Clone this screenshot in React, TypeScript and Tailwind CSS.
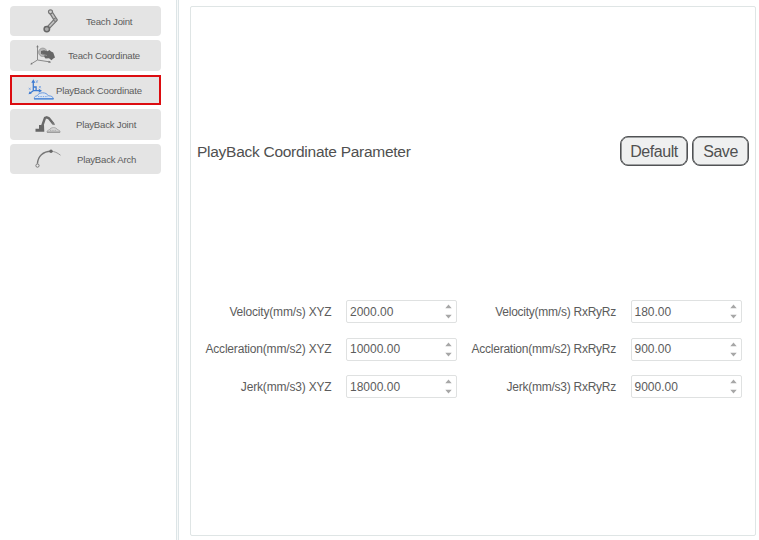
import type { ReactNode } from "react";

const TeachJointIcon = () => (
  <svg width="16" height="24" viewBox="0 0 16 24" fill="none" className="shrink-0">
    <path d="M7.5 2.8 12.6 10.8 4 20" stroke="#747474" strokeWidth="4" strokeLinejoin="round" />
    <path d="M7.5 2.8 12.6 10.8 4 20" stroke="#c2c2c2" strokeWidth="1.7" />
    <circle cx="7.5" cy="2.8" r="2" fill="#cfcfcf" stroke="#747474" strokeWidth="1.2" />
    <circle cx="12.4" cy="10.8" r="1.7" fill="#aaa" stroke="#747474" />
    <circle cx="3.8" cy="20.1" r="2.7" fill="#aaa" stroke="#666" strokeWidth="1.5" />
  </svg>
);

const TeachCoordinateIcon = () => (
  <svg width="26" height="22" viewBox="0 0 26 22" fill="none" className="shrink-0">
    <path d="M7.5 2v14M7.5 16l13 2M7.5 16 1 20" stroke="#8a8a8a" strokeWidth="1" />
    <path d="M7.5 1 6.3 3.3h2.4ZM21 18.2l-2.3-1.4-.3 2.2ZM.3 20.6l1-2.2 1.3 1.8Z" fill="#777" />
    <circle cx="12.8" cy="8.3" r="4.2" fill="#b8b8b8" stroke="#a0a0a0" />
    <path d="m11 7 3-.7 3.5 1 2-1.3 1.5 1.5 2.2 1 1.8 5-2 1.3-1.5 1.5-2.5-2-3.5.2-1.5-2 1-.7-4-2Z" fill="#666" />
    <path d="m12 10 5 1.5" stroke="#999" strokeWidth=".8" />
  </svg>
);

const PlaybackCoordinateIcon = () => (
  <svg width="26" height="21" viewBox="0 0 26 21" fill="none" className="shrink-0">
    <path d="M5.3 2.5v9.2h7.2M5.3 11.7l-3.5 2.5M5.3 8h2.8v3.7" stroke="#3c7bd2" strokeWidth="1.3" />
    <path d="M5.3.3 3.3 3.7h4ZM14 11.7l-3.2-2v4ZM.5 15.3l1.2-3 2 2.3Z" fill="#3c7bd2" />
    <path d="m8 1.5 1.6 2M9.8 1.2 8 4M11 7l1.8 2.3M12.8 7 11 9.3M.8 8.8l1.8 2M2.5 8.7l-1.4 2" stroke="#78a3e2" strokeWidth=".8" />
    <path d="M6.3 19.8c0-2 .8-2.8 2.6-2.8 1-2 3.3-3.2 5.8-3.2 2.7 0 4.6 1.1 5.6 3 3.1 0 4.7 1 5.2 3Z" fill="#dce6f3" stroke="#5b90dc" strokeWidth=".9" />
    <path d="M6 19.9h19.5" stroke="#3c7bd2" strokeWidth="1.1" />
    <path d="M10 17.6h10" stroke="#6b9be0" strokeWidth=".9" strokeDasharray="1.4 1" />
  </svg>
);

const PlaybackJointIcon = () => (
  <svg width="26" height="18" viewBox="0 0 26 18" fill="none" className="shrink-0">
    <path d="M.5 16.7v-3H4V10h5l.3 6.7Z" fill="#666" />
    <path d="m7 11.5 3-8.7 1.7-.5 2 .8 4.8 6" stroke="#696969" strokeWidth="2.4" strokeLinejoin="round" />
    <path d="m17 7.2 2.5 2.6" stroke="#777" strokeWidth="1.5" />
    <path d="M12 17.2c0-1.5 1-2.2 2.3-2.2.8-1.6 2.2-2.4 4.2-2.4s3.4.8 4.2 2.4c1.6 0 2.4.7 2.4 2.2Z" fill="#d6d6d6" stroke="#a0a0a0" strokeWidth=".8" />
    <path d="M12 17.2h13" stroke="#929292" />
    <path d="M15 15.4h7" stroke="#999" strokeWidth=".7" strokeDasharray="1.3 1" />
  </svg>
);

const PlaybackArchIcon = () => (
  <svg width="26" height="19" viewBox="0 0 26 19" fill="none" className="shrink-0">
    <path d="M2.4 14.8C2.8 7.5 8 2.2 16 2.2" stroke="#777" strokeWidth="1.4" />
    <path d="M16 2.2c3.5.2 6.3 1.5 9.5 4" stroke="#999" />
    <circle cx="16" cy="2.3" r="1.7" fill="#666" />
    <circle cx="2.5" cy="16.6" r="1.6" fill="#eee" stroke="#777" />
  </svg>
);

type NavItem = { label: string; icon: ReactNode; inset: string; gap: string; active?: boolean };

const navItems: NavItem[] = [
  { label: "Teach Joint", icon: <TeachJointIcon />, inset: "pl-[33px]", gap: "gap-[27px]" },
  { label: "Teach Coordinate", icon: <TeachCoordinateIcon />, inset: "pl-[20px]", gap: "gap-[12px]" },
  { label: "PlayBack Coordinate", icon: <PlaybackCoordinateIcon />, inset: "pl-[18px]", gap: "gap-[2px]", active: true },
  { label: "PlayBack Joint", icon: <PlaybackJointIcon />, inset: "pl-[25px]", gap: "gap-[15px]" },
  { label: "PlayBack Arch", icon: <PlaybackArchIcon />, inset: "pl-[25px]", gap: "gap-[16px]" },
];

function NavButton({ label, icon, inset, gap, active }: NavItem) {
  return (
    <button
      className={`flex h-[30.5px] w-[151px] items-center whitespace-nowrap text-[9.6px] tracking-[-0.2px] text-[#5c5c5c] ${inset} ${gap} ${
        active ? "bg-[#e4e4e4] outline-2 -outline-offset-2 outline-[#dc0c10]" : "rounded-[4px] bg-[#e4e4e4]"
      }`}
    >
      {icon}
      <span className="pt-[2px]">{label}</span>
    </button>
  );
}

function SpinField({ label, value, tracking }: { label: string; value: string; tracking: string }) {
  return (
    <div className="flex h-[23px] items-center justify-end">
      <span className={`whitespace-nowrap text-[12px] text-[#5c5c5c] ${tracking}`}>{label}</span>
      <div className="ml-[14.5px] flex h-[23px] w-[111px] shrink-0 items-center justify-between rounded-[2px] border border-[#dfe1e1] bg-white pr-[4px] pl-[3px]">
        <span className="text-[12px] text-[#5c5c5c]">{value}</span>
        <svg width="7" height="15" viewBox="0 0 7 15" fill="#a7a7a7">
          <path d="M.3 4.2 3.5.6l3.2 3.6ZM.3 10.8h6.4l-3.2 3.6Z" />
        </svg>
      </div>
    </div>
  );
}

const linear = "tracking-[-0.18px]";
const angular = "tracking-[-0.25px]";

const actionClass =
  "h-[30px] rounded-[8px] border border-[#505254] bg-[#eff0f0] pt-px text-[16px] tracking-[-0.45px] text-[#505050] shadow-[inset_0_0_0_0.6px_#505254]";

export default function App() {
  return (
    <div className="flex h-[540px] w-[759px] overflow-hidden bg-white font-['Liberation_Sans',Arial,sans-serif]">
      <nav className="flex w-[176px] shrink-0 flex-col gap-[4px] pt-[5.5px] pl-[10px]">
        {navItems.map((item) => (
          <NavButton key={item.label} {...item} />
        ))}
      </nav>
      <div className="w-[3px] shrink-0 border-x border-[#dde5e7] bg-[#f8fafa]" />
      <main className="mt-[6px] ml-[11px] flex h-[530px] w-[566px] shrink-0 flex-col rounded-[2px] border border-[#dfe5e5] bg-white">
        <header className="mt-[129px] flex h-[31px] items-start pr-[6px] pl-[6px]">
          <h1 className="flex-1 pt-[4px] text-[15.5px] leading-[23px] tracking-[-0.27px] text-[#505050]">PlayBack Coordinate Parameter</h1>
          <button className={`w-[68px] ${actionClass}`}>Default</button>
          <button className={`ml-[4px] w-[57px] ${actionClass}`}>Save</button>
        </header>
        <section className="mt-[133px] grid grid-cols-[266px_284.5px] gap-y-[14.5px]">
          <SpinField label="Velocity(mm/s) XYZ" value="2000.00" tracking={linear} />
          <SpinField label="Velocity(mm/s) RxRyRz" value="180.00" tracking={angular} />
          <SpinField label="Accleration(mm/s2) XYZ" value="10000.00" tracking={linear} />
          <SpinField label="Accleration(mm/s2) RxRyRz" value="900.00" tracking={angular} />
          <SpinField label="Jerk(mm/s3) XYZ" value="18000.00" tracking={linear} />
          <SpinField label="Jerk(mm/s3) RxRyRz" value="9000.00" tracking={angular} />
        </section>
      </main>
    </div>
  );
}
